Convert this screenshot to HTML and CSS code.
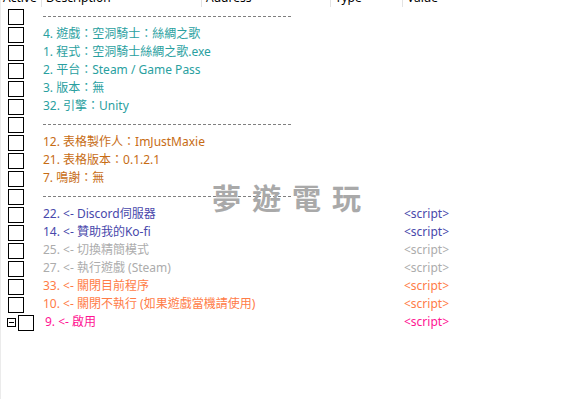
FILE: index.html
```html
<!DOCTYPE html>
<html lang="zh-Hant">
<head>
<meta charset="utf-8">
<title>Cheat Table</title>
<link rel="stylesheet" href="styles.css">
</head>
<body>
<div class="frame">
  <div class="hdr">
    <div class="hc c-active"><span>Active</span></div>
    <div class="hc c-desc"><span>Description</span></div>
    <div class="hc c-addr"><span>Address</span></div>
    <div class="hc c-type"><span>Type</span></div>
    <div class="hc c-val"><span>Value</span></div>
  </div>
  <div class="rows">
    <div class="row"><span class="chk"></span><div class="desc"><span class="dash"></span></div></div>
    <div class="row teal"><span class="chk"></span><div class="desc">4. 遊戲：空洞騎士：絲綢之歌</div></div>
    <div class="row teal"><span class="chk"></span><div class="desc">1. 程式：空洞騎士絲綢之歌.exe</div></div>
    <div class="row teal"><span class="chk"></span><div class="desc">2. 平台：Steam / Game Pass</div></div>
    <div class="row teal"><span class="chk"></span><div class="desc">3. 版本：無</div></div>
    <div class="row teal"><span class="chk"></span><div class="desc">32. 引擎：Unity</div></div>
    <div class="row"><span class="chk"></span><div class="desc"><span class="dash"></span></div></div>
    <div class="row brown"><span class="chk"></span><div class="desc">12. 表格製作人：ImJustMaxie</div></div>
    <div class="row brown"><span class="chk"></span><div class="desc">21. 表格版本：0.1.2.1</div></div>
    <div class="row brown"><span class="chk"></span><div class="desc">7. 鳴謝：無</div></div>
    <div class="row"><span class="chk"></span><div class="desc"><span class="dash"></span></div></div>
    <div class="row blue"><span class="chk"></span><div class="desc">22. &lt;- Discord伺服器</div><div class="val">&lt;script&gt;</div></div>
    <div class="row blue"><span class="chk"></span><div class="desc">14. &lt;- 贊助我的Ko-fi</div><div class="val">&lt;script&gt;</div></div>
    <div class="row gray"><span class="chk"></span><div class="desc">25. &lt;- 切換精簡模式</div><div class="val">&lt;script&gt;</div></div>
    <div class="row gray"><span class="chk"></span><div class="desc">27. &lt;- 執行遊戲 (Steam)</div><div class="val">&lt;script&gt;</div></div>
    <div class="row orange"><span class="chk"></span><div class="desc">33. &lt;- 關閉目前程序</div><div class="val">&lt;script&gt;</div></div>
    <div class="row orange"><span class="chk"></span><div class="desc">10. &lt;- 關閉不執行 (如果遊戲當機請使用)</div><div class="val">&lt;script&gt;</div></div>
    <div class="row pink group"><span class="tog"><span class="minus"></span></span><span class="chk"></span><div class="desc">9. &lt;- 啟用</div><div class="val">&lt;script&gt;</div></div>
  </div>
  <div class="mark">夢遊電玩</div>
</div>
</body>
</html>
```

FILE: styles.css
```css
html, body {
  margin: 0;
  padding: 0;
  background: #ffffff;
}
body {
  font-family: "Noto Sans", "Noto Sans CJK TC", sans-serif;
  font-size: 12px;
  color: #000;
}
.frame {
  position: relative;
  width: 570px;
  height: 399px;
  border-left: 1px solid #ebebeb;
  overflow: hidden;
}
.hdr {
  display: flex;
  height: 7px;
  overflow: hidden;
}
.hc {
  height: 7px;
  border-right: 1px solid #e3e3e3;
  box-sizing: border-box;
  overflow: hidden;
  white-space: nowrap;
}
.hc span {
  display: block;
  margin-top: -9px;
  line-height: 14px;
  padding-left: 4px;
}
.c-active { width: 41px; }
.c-active span { padding-left: 2px; }
.c-desc { width: 160px; }
.c-addr { width: 129px; }
.c-type { width: 72px; }
.c-val { flex: 1; border-right: none; }
.rows {
  display: flex;
  flex-direction: column;
}
.row {
  display: flex;
  align-items: center;
  height: 18px;
  white-space: nowrap;
}
.chk {
  flex: none;
  width: 14px;
  height: 14px;
  border: 1px solid #000;
  margin-left: 7px;
  margin-right: 19px;
  margin-top: 1px;
  background: #fff;
}
.desc {
  width: 361px;
  flex: none;
  line-height: 18px;
}
.val {
  line-height: 18px;
}
.dash {
  display: block;
  width: 248px;
  height: 1px;
  margin-top: 1px;
  background-image: repeating-linear-gradient(90deg, #7f7f7f 0 3px, transparent 3px 5px);
}
.teal { color: #2a9f9f; }
.brown { color: #c76c14; }
.blue { color: #4848ab; }
.gray { color: #acacac; }
.orange { color: #ff7c47; }
.pink { color: #ff1493; }
.group .tog {
  flex: none;
  width: 7px;
  height: 7px;
  border: 1px solid #000;
  margin-left: 6px;
  margin-top: 1px;
  display: flex;
  align-items: center;
  justify-content: center;
}
.group .minus {
  width: 5px;
  height: 1px;
  background: #000;
}
.group .chk {
  margin-left: 2px;
  margin-right: 11px;
}
.group .desc {
  width: 359px;
}
.mark {
  position: absolute;
  left: 211px;
  top: 178px;
  font-family: "Noto Sans CJK TC", sans-serif;
  font-size: 29px;
  font-weight: 700;
  letter-spacing: 11px;
  color: #a9a9a9;
  line-height: 38px;
  white-space: nowrap;
}
```
